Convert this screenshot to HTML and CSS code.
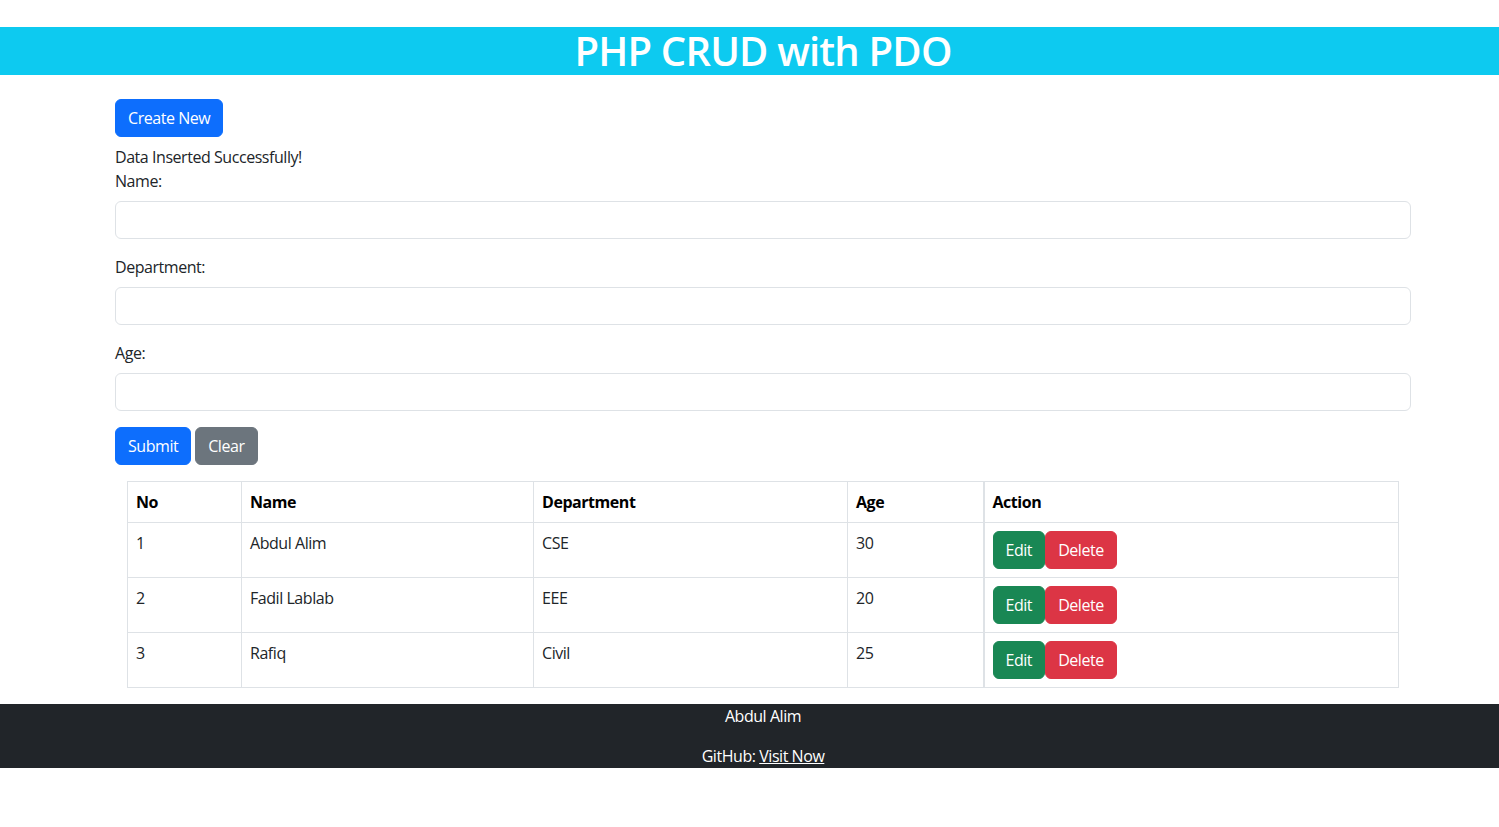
FILE: index.html
```html
<!DOCTYPE html>
<html lang="en">
<head>
<meta charset="utf-8">
<title>PHP CRUD with PDO</title>
<link rel="stylesheet" href="styles.css">
</head>
<body>
<header class="top-bar">
  <h1 class="title">PHP CRUD with PDO</h1>
</header>
<main class="container">
  <div class="actions-top">
    <button class="btn btn-primary">Create New</button>
  </div>
  <p class="message">Data Inserted Successfully!</p>
  <form class="form">
    <div class="field">
      <label class="label">Name:</label>
      <input class="input" type="text">
    </div>
    <div class="field">
      <label class="label">Department:</label>
      <input class="input" type="text">
    </div>
    <div class="field">
      <label class="label">Age:</label>
      <input class="input" type="text">
    </div>
    <div class="form-buttons">
      <button type="button" class="btn btn-primary">Submit</button>
      <button type="button" class="btn btn-secondary">Clear</button>
    </div>
  </form>
  <div class="table-wrap">
    <table class="table">
      <thead>
        <tr>
          <th class="c-no">No</th>
          <th class="c-name">Name</th>
          <th class="c-dept">Department</th>
          <th class="c-age">Age</th>
          <th class="c-act">Action</th>
        </tr>
      </thead>
      <tbody>
        <tr>
          <td>1</td><td>Abdul Alim</td><td>CSE</td><td>30</td>
          <td class="c-act"><div class="btn-pair"><button class="btn btn-success">Edit</button><button class="btn btn-danger">Delete</button></div></td>
        </tr>
        <tr>
          <td>2</td><td>Fadil Lablab</td><td>EEE</td><td>20</td>
          <td class="c-act"><div class="btn-pair"><button class="btn btn-success">Edit</button><button class="btn btn-danger">Delete</button></div></td>
        </tr>
        <tr>
          <td>3</td><td>Rafiq</td><td>Civil</td><td>25</td>
          <td class="c-act"><div class="btn-pair"><button class="btn btn-success">Edit</button><button class="btn btn-danger">Delete</button></div></td>
        </tr>
      </tbody>
    </table>
  </div>
</main>
<footer class="footer">
  <p class="footer-name">Abdul Alim</p>
  <p class="footer-link">GitHub: <a href="#" class="link">Visit Now</a></p>
</footer>
</body>
</html>
```
FILE: styles.css
```css
* { box-sizing: border-box; }
html, body { margin: 0; padding: 0; }
body {
  font-family: "Open Sans", "Noto Sans", "Liberation Sans", sans-serif;
  font-size: 16px;
  line-height: 24px;
  letter-spacing: -0.45px;
  color: #212529;
  background: #fff;
  padding-top: 27px;
}
.top-bar {
  background: #0dcaf0;
  height: 48px;
  padding-left: 27px;
}
.title {
  margin: 0;
  text-align: center;
  color: #fff;
  font-size: 40px;
  line-height: 48px;
  font-weight: 600;
  letter-spacing: -0.8px;
}
.container {
  width: 1296px;
  margin-left: 115px;
  padding-top: 24px;
  padding-bottom: 16px;
}
.btn {
  display: inline-block;
  font-family: inherit;
  font-size: 16px;
  line-height: 24px;
  letter-spacing: -0.45px;
  padding: 6px 12px;
  border: 1px solid transparent;
  border-radius: 6px;
  color: #fff;
  cursor: pointer;
}
.btn-primary { background: #0d6efd; border-color: #0d6efd; }
.btn-secondary { background: #6c757d; border-color: #6c757d; }
.btn-success { background: #198754; border-color: #198754; }
.btn-danger { background: #dc3545; border-color: #dc3545; }
.message { margin: 8px 0 0; }
.form { margin: 0; }
.field { margin-bottom: 16px; display: flex; flex-direction: column; align-items: flex-start; }
.label { display: block; margin-bottom: 8px; }
.input {
  width: 100%;
  height: 38px;
  border: 1px solid #dee2e6;
  border-radius: 6px;
  padding: 6px 12px;
  font: inherit;
}
.form-buttons { display: flex; gap: 4px; }
.table-wrap { padding: 16px 12px 0; }
.table {
  width: 100%;
  border-collapse: collapse;
  color: #212529;
}
.table th, .table td {
  border: 1px solid #dee2e6;
  padding: 8px;
  text-align: left;
  vertical-align: top;
}
.table th { font-weight: 700; color: #000; }
.c-no { width: 114px; }
.c-name { width: 292px; }
.c-dept { width: 314px; }
.c-age { width: 136px; }
.table .c-act { border-left-width: 2px; }
.btn-pair { display: flex; }
.footer {
  background: #212529;
  color: #fff;
  height: 64px;
  padding-left: 27px;
  text-align: center;
}
.footer-name { margin: 0 0 16px; }
.footer-link { margin: 0; }
.link { color: #fff; text-decoration: underline; }
```
